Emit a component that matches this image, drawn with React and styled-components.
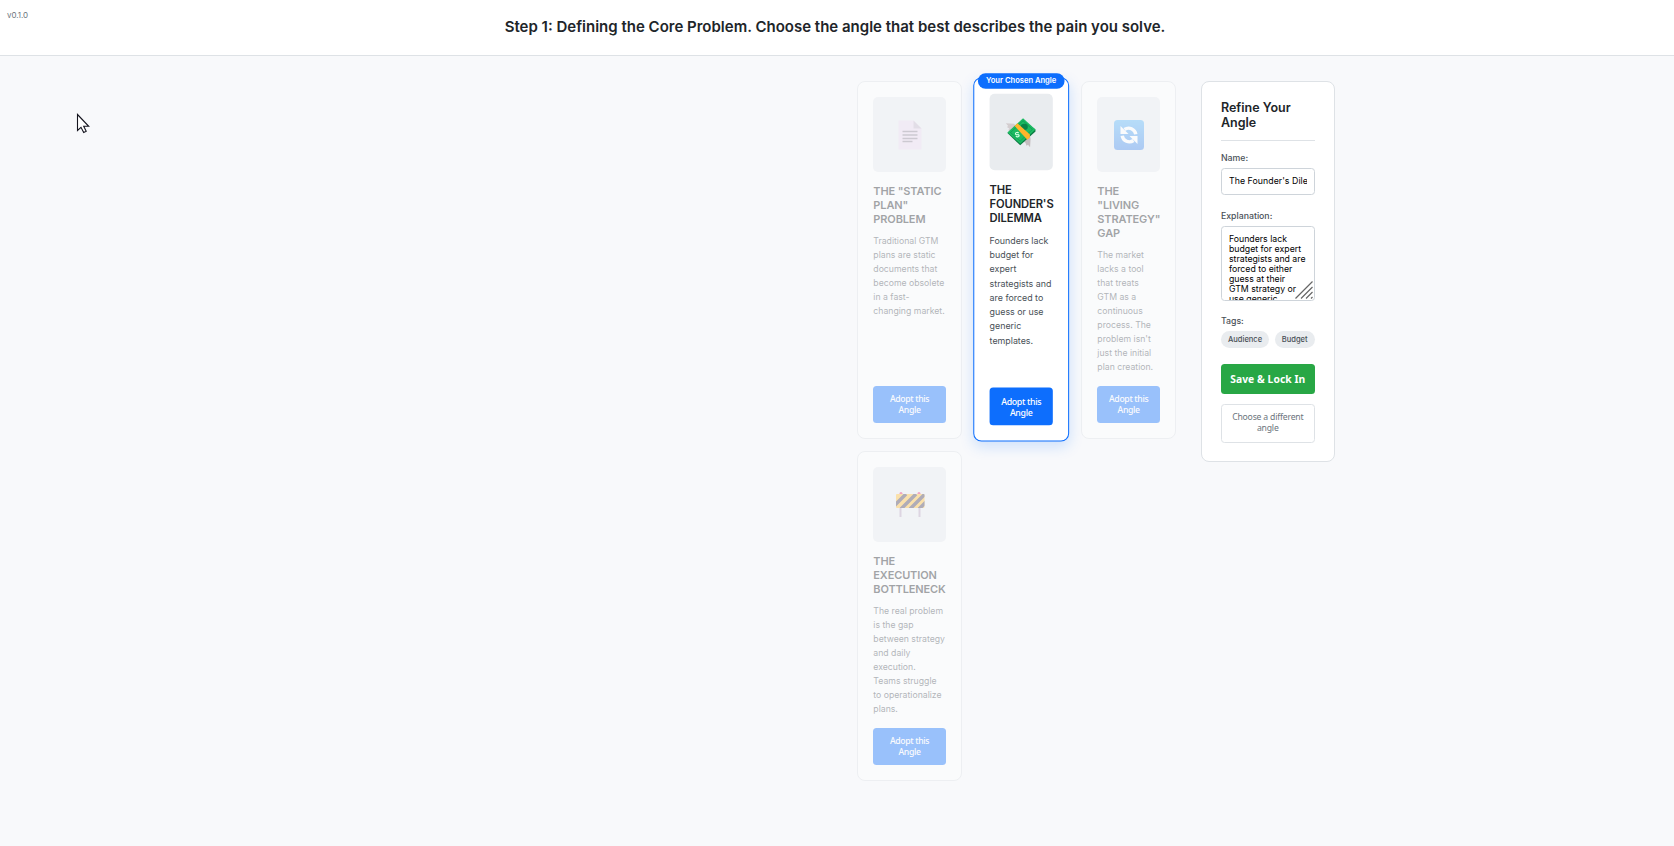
import React from "react";
import styled, { createGlobalStyle, css } from "styled-components";

const GlobalStyle = createGlobalStyle`
  *, *::before, *::after { box-sizing: border-box; }
  body {
    margin: 0;
    background: #f8f9fb;
    color: #212529;
    font-family: Inter, "Liberation Sans", sans-serif;
  }
`;

const uiFont = `"Noto Sans", "Open Sans", sans-serif`;

const Page = styled.div`
  position: relative;
  min-height: 846px;
  overflow: hidden;
`;

const Header = styled.header`
  height: 56px;
  display: flex;
  justify-content: center;
  padding-top: 17px;
  padding-right: 4px;
  background: #fff;
  border-bottom: 1px solid #dee2e6;
`;

const Heading = styled.h1`
  margin: 0;
  font-size: 15px;
  line-height: 20px;
  font-weight: 600;
  white-space: nowrap;
`;

const Version = styled.span`
  position: absolute;
  left: 7px;
  top: 10px;
  font-size: 8px;
  line-height: 11px;
  letter-spacing: -0.05px;
  color: #6c757d;
`;

const Main = styled.main`
  display: flex;
  align-items: flex-start;
  gap: 25.3px;
  padding: 25.33px 0 0 857.33px;
`;

const Grid = styled.section`
  display: grid;
  grid-template-columns: 104.5px 94px 94.67px;
  grid-template-rows: 357.33px 329.3px;
  gap: 12.8px 12.75px;
`;

const Card = styled.article`
  position: relative;
  display: flex;
  flex-direction: column;
  padding: 15px;
  background: #fff;
  border: 1px solid #dee2e6;
  border-radius: 8px;
  ${({ $chosen }) =>
    $chosen
      ? css`
          border-color: #0d6efd;
          transform: translateX(-0.8px) scale(1.02);
          box-shadow: 0 5px 14px rgba(13, 110, 253, 0.17);
        `
      : css`
          opacity: 0.4;
        `}
`;

const ChosenBadge = styled.span`
  position: absolute;
  top: -5px;
  left: 50%;
  transform: translateX(-50%);
  padding: 0 8px;
  border-radius: 8px;
  background: #0d6efd;
  color: #fff;
  font-size: 7.45px;
  line-height: 14.7px;
  font-weight: 600;
  white-space: nowrap;
`;

const Picture = styled.div`
  height: 75px;
  flex: none;
  display: flex;
  align-items: center;
  justify-content: center;
  border-radius: 5px;
  background: #e9ecef;
  svg { display: block; flex: none; }
`;

const CardTitle = styled.h2`
  margin: 12px 0 8px;
  font-size: 11px;
  line-height: 14px;
  letter-spacing: -0.13px;
  font-weight: 600;
  text-transform: uppercase;
  white-space: nowrap;
`;

const Description = styled.p`
  margin: 0;
  flex: 1;
  font-size: 8.7px;
  line-height: 14px;
  color: #495057;
  white-space: nowrap;
`;

const AdoptButton = styled.button`
  height: 37px;
  padding: 2px 0 0;
  border: 0;
  border-radius: 3.5px;
  background: #0d6efd;
  color: #fff;
  font: 500 8.67px/11.3px ${uiFont};
  letter-spacing: -0.33px;
`;

const Panel = styled.aside`
  width: 133.33px;
  height: 380.4px;
  padding: 17px 19px 0 18.67px;
  background: #fff;
  border: 1px solid #dee2e6;
  border-radius: 8px;
`;

const PanelTitle = styled.h2`
  margin: 0 0 12px;
  padding-top: 0.5px;
  padding-bottom: 10px;
  border-bottom: 1px solid #dee2e6;
  font-size: 12.5px;
  line-height: 15px;
  font-weight: 600;
`;

const Label = styled.label`
  display: block;
  height: 15px;
  font-size: 8.75px;
  line-height: 11px;
  font-weight: 500;
  color: #495057;
`;

const fieldStyle = css`
  display: block;
  width: 100%;
  margin: 0;
  border: 1px solid #ced4da;
  border-radius: 3.5px;
  background: #fff;
  color: #000;
  font-family: Inter, sans-serif;
  font-size: 8.75px;
`;

const TextInput = styled.input`
  ${fieldStyle}
  height: 27px;
  margin-bottom: 16px;
  padding: 0 7px;
  letter-spacing: 0.06px;
`;

const TextAreaWrap = styled.div`
  position: relative;
  margin-bottom: 15px;
`;

const TextArea = styled.textarea`
  ${fieldStyle}
  height: 75px;
  padding: 7px 0 0 7px;
  line-height: 10px;
  resize: none;
  overflow: hidden;
  white-space: pre;
`;

const Grip = styled.svg`
  position: absolute;
  right: 2px;
  bottom: 2px;
`;

const Tags = styled.div`
  display: flex;
  justify-content: space-between;
  margin-bottom: 16px;
`;

const Tag = styled.span`
  padding: 0 7px;
  border-radius: 9px;
  background: #e9ecef;
  color: #495057;
  font-size: 7.55px;
  line-height: 17px;
  font-weight: 500;
`;

const PanelButton = styled.button`
  display: block;
  width: 100%;
  height: ${({ $primary }) => ($primary ? 30 : 39)}px;
  margin: 0 0 10px;
  padding: ${({ $primary }) => ($primary ? "1px 0 0" : "0")};
  border: ${({ $primary }) => ($primary ? "0" : "1px solid #dee2e6")};
  border-radius: 3.5px;
  background: ${({ $primary }) => ($primary ? "#28a745" : "#fff")};
  color: ${({ $primary }) => ($primary ? "#fff" : "#6c757d")};
  font: ${({ $primary }) => ($primary ? "700 10.3px/14px" : "400 8.67px/11.3px")} ${uiFont};
  letter-spacing: ${({ $primary }) => ($primary ? "0.07px" : "-0.2px")};
  white-space: nowrap;
`;

const Pointer = styled.svg`
  position: absolute;
  left: 76px;
  top: 113px;
`;

function DocumentIcon() {
  return (
    <svg width="26" height="32" viewBox="0 0 26 32">
      <path d="M1.500 1.500h15l8 8v21h-23z" fill="#e8d8ee" />
      <path d="M16.500 1.500v8h8z" fill="#c3b8ca" />
      <path d="M5.500 12.500h15M5.500 16h15M5.500 19.500h15M5.500 22.500h10" stroke="#8c8494" strokeWidth="1.300" />
    </svg>
  );
}

function MoneyIcon() {
  return (
    <svg width="30" height="30" viewBox="0 0 30 30">
      <path d="M0 6 8 6.500l3.500 4-8 6-1-4.500 1-.8-2.500-1.500 1.200-1z" fill="#d3cdcf" />
      <path d="m19 20 4-4 1.200 5-.5 8.500-2-2.500-1.500 1-1-3-1.500-1z" fill="#c4bcbf" />
      <path d="M1.500 15.500 16 2.500 29 12v2L14 27.500z" fill="#0a7a42" />
      <path d="M1.500 15 16.800 1 29 12 14 26z" fill="#1cba62" />
      <path d="M4.500 15 16.800 3.500 26 12 14 23.500z" fill="none" stroke="#0f9b53" strokeWidth=".8" />
      <ellipse cx="18" cy="9.500" rx="3.500" ry="3" fill="#0a8547" />
      <path d="m8.500 8.500 2.800-2.600 12.200 11v3l-2.500 2.100z" fill="#ffb52b" />
      <path d="M12.500 15.500c-1.500-1.500-4 0-2.700 1.500 1 .7 2.300-.5 3 .5.700 1.700-2 2.500-3 1" fill="none" stroke="#d5ffe2" strokeWidth="1.100" />
    </svg>
  );
}

function RefreshIcon() {
  return (
    <svg width="30" height="30" viewBox="0 0 30 30">
      <defs>
        <linearGradient id="refreshFill" x2="0" y2="1">
          <stop stopColor="#55b3f7" />
          <stop offset="1" stopColor="#3f86e8" />
        </linearGradient>
      </defs>
      <rect width="30" height="30" rx="3.500" fill="url(#refreshFill)" />
      <path d="M10.500 9.500A7.200 7.200 0 0 1 21.800 14.200M19.500 20.500A7.200 7.200 0 0 1 8.200 15.800" fill="none" stroke="#fff" strokeWidth="3.400" />
      <path d="M6.500 6v8h8zM23.500 24v-8h-8z" fill="#fff" />
    </svg>
  );
}

function BarrierIcon() {
  return (
    <svg width="30" height="25" viewBox="0 0 30 25">
      <path d="M5.500 14.500V25M24.500 14.500V25" stroke="#b5a2bd" strokeWidth="2" />
      <path d="M4.500 2.500V1q1.500-2 3 0v1.500zM22.500 2.500V1q1.500-2 3 0v1.500z" fill="#e8276e" />
      <clipPath id="barrierClip"><rect x="1" y="2" width="28.500" height="14" rx="1" /></clipPath>
      <g clipPath="url(#barrierClip)">
        <rect x="1" y="2" width="29" height="14" fill="#ffbd35" />
        <path d="m-3 16 14-14M6 17 21 2M15 17 30 2M24 17 39 2" stroke="#433a55" strokeWidth="3.500" />
      </g>
    </svg>
  );
}

const angles = [
  {
    icon: DocumentIcon,
    title: ['The "Static', 'Plan"', "Problem"],
    text: ["Traditional GTM", "plans are static", "documents that", "become obsolete", "in a fast-", "changing market."],
  },
  {
    icon: MoneyIcon,
    chosen: true,
    title: ["The", "Founder's", "Dilemma"],
    text: ["Founders lack", "budget for", "expert", "strategists and", "are forced to", "guess or use", "generic", "templates."],
  },
  {
    icon: RefreshIcon,
    title: ["The", '"Living', 'Strategy"', "Gap"],
    text: ["The market", "lacks a tool", "that treats", "GTM as a", "continuous", "process. The", "problem isn't", "just the initial", "plan creation."],
  },
  {
    icon: BarrierIcon,
    title: ["The", "Execution", "Bottleneck"],
    text: ["The real problem", "is the gap", "between strategy", "and daily", "execution.", "Teams struggle", "to operationalize", "plans."],
  },
];

const explanation = [
  "Founders lack",
  "budget for expert",
  "strategists and are",
  "forced to either",
  "guess at their",
  "GTM strategy or",
  "use generic",
].join("\n");

function Lines({ items }) {
  return items.map((line, i) => (
    <React.Fragment key={line}>
      {i > 0 && <br />}
      {line}
    </React.Fragment>
  ));
}

function AngleCard({ angle }) {
  const Icon = angle.icon;
  return (
    <Card $chosen={angle.chosen}>
      {angle.chosen && <ChosenBadge>Your Chosen Angle</ChosenBadge>}
      <Picture><Icon /></Picture>
      <CardTitle><Lines items={angle.title} /></CardTitle>
      <Description><Lines items={angle.text} /></Description>
      <AdoptButton>Adopt this<br />Angle</AdoptButton>
    </Card>
  );
}

export default function App() {
  return (
    <Page>
      <GlobalStyle />
      <Header>
        <Heading>Step 1: Defining the Core Problem. Choose the angle that best describes the pain you solve.</Heading>
      </Header>
      <Version>v0.1.0</Version>
      <Main>
        <Grid>
          {angles.map((angle) => <AngleCard key={angle.title.join(" ")} angle={angle} />)}
        </Grid>
        <Panel>
          <PanelTitle>Refine Your<br />Angle</PanelTitle>
          <Label htmlFor="name">Name:</Label>
          <TextInput id="name" defaultValue="The Founder's Dile" />
          <Label htmlFor="explanation">Explanation:</Label>
          <TextAreaWrap>
            <TextArea id="explanation" defaultValue={explanation} />
            <Grip width="18" height="18" viewBox="0 0 18 18">
              <path d="M.5 17.500 17.500.5M6 17.500 17.500 6M11 17.500l6.500-6.500M16 17.500l1.500-1.500" stroke="#666" strokeWidth="1.200" />
            </Grip>
          </TextAreaWrap>
          <Label as="div">Tags:</Label>
          <Tags>
            <Tag>Audience</Tag>
            <Tag>Budget</Tag>
          </Tags>
          <PanelButton $primary>Save &amp; Lock In</PanelButton>
          <PanelButton>Choose a different<br />angle</PanelButton>
        </Panel>
      </Main>
      <Pointer width="15" height="22" viewBox="0 0 15 22">
        <path d="M1.500 1.500v16l3.500-3.200 2.700 5.200 2.500-1.200-2.500-5h5z" fill="#fff" stroke="#15151f" strokeWidth="1.100" />
      </Pointer>
    </Page>
  );
}
